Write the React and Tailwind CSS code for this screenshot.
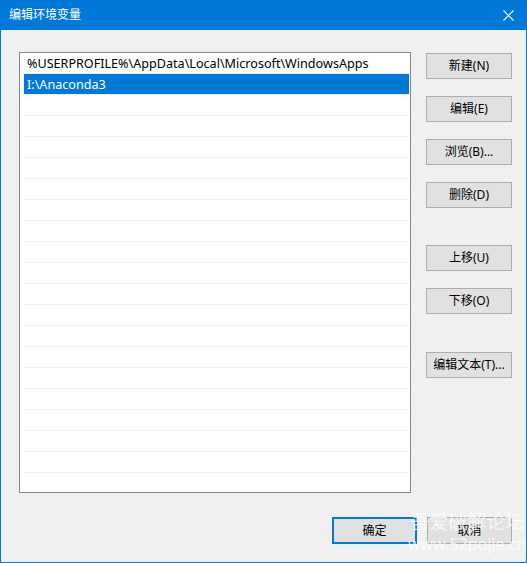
import React from 'react';

const font = { fontFamily: '"Noto Sans", "Noto Sans CJK SC", sans-serif' };

const paths = [
  '%USERPROFILE%\\AppData\\Local\\Microsoft\\WindowsApps',
  'I:\\Anaconda3',
];

function Btn({ children, className = '' }) {
  return (
    <div
      className={
        'w-[86px] h-[26px] flex items-center justify-center bg-[#e1e1e1] border border-[#adadad] text-[12px] text-black leading-none ' +
        className
      }
    >
      {children}
    </div>
  );
}

export default function App() {
  const rows = [];
  for (let i = 0; i < 21; i++) rows.push(paths[i] || '');

  return (
    <div className="relative w-[527px] h-[563px] flex flex-col bg-[#0078d7] overflow-hidden" style={font}>
      {/* Title bar */}
      <div className="h-[30px] flex items-center justify-between pl-[9px] pr-[13px] text-white text-[12px]">
        <span>编辑环境变量</span>
        <svg width="11" height="11" viewBox="0 0 11 11">
          <path d="M0.5 0.5L10.5 10.5M10.5 0.5L0.5 10.5" stroke="white" strokeWidth="1.1" />
        </svg>
      </div>

      {/* Body */}
      <div className="flex-1 mx-[1px] mb-[1px] bg-[#f0f0f0] flex flex-col">
        <div className="flex pt-[22px] pl-[18px]">
          {/* List */}
          <div className="w-[392px] h-[441px] border border-[#828790] bg-white pl-[4px] pr-[1px] overflow-hidden">
            {rows.map((r, i) => (
              <div
                key={i}
                className={
                  'h-[21px] border-b border-[#f0f0f0] flex items-center pl-[3px] pt-[2px] text-[12.6px] whitespace-nowrap ' +
                  (i === 1 ? 'bg-[#0078d7] text-white' : 'text-black')
                }
              >
                {r}
              </div>
            ))}
          </div>

          {/* Buttons */}
          <div className="ml-[15px] mt-[1px] flex flex-col">
            <Btn>新建(N)</Btn>
            <Btn className="mt-[17px]">编辑(E)</Btn>
            <Btn className="mt-[17px]">浏览(B)...</Btn>
            <Btn className="mt-[17px]">删除(D)</Btn>
            <Btn className="mt-[37px]">上移(U)</Btn>
            <Btn className="mt-[17px]">下移(O)</Btn>
            <Btn className="mt-[38px]">编辑文本(T)...</Btn>
          </div>
        </div>

        {/* Bottom buttons */}
        <div className="flex justify-end gap-[10px] mt-[24px] pr-[14px]">
          <div className="w-[85px] h-[27px] flex items-center justify-center bg-[#e1e1e1] border-2 border-[#0078d7] text-[12px] text-black leading-none">
            确定
          </div>
          <div className="w-[85px] h-[27px] flex items-center justify-center bg-[#e1e1e1] border border-[#adadad] text-[12px] text-black leading-none">
            取消
          </div>
        </div>
      </div>

      {/* Watermark */}
      <div className="absolute left-[408px] top-[513px] flex flex-col items-center text-white/75 leading-none pointer-events-none">
        <span className="text-[19px]">吾爱破解论坛</span>
        <span className="text-[16px] mt-[4px]">www.52pojie.cn</span>
      </div>
    </div>
  );
}
